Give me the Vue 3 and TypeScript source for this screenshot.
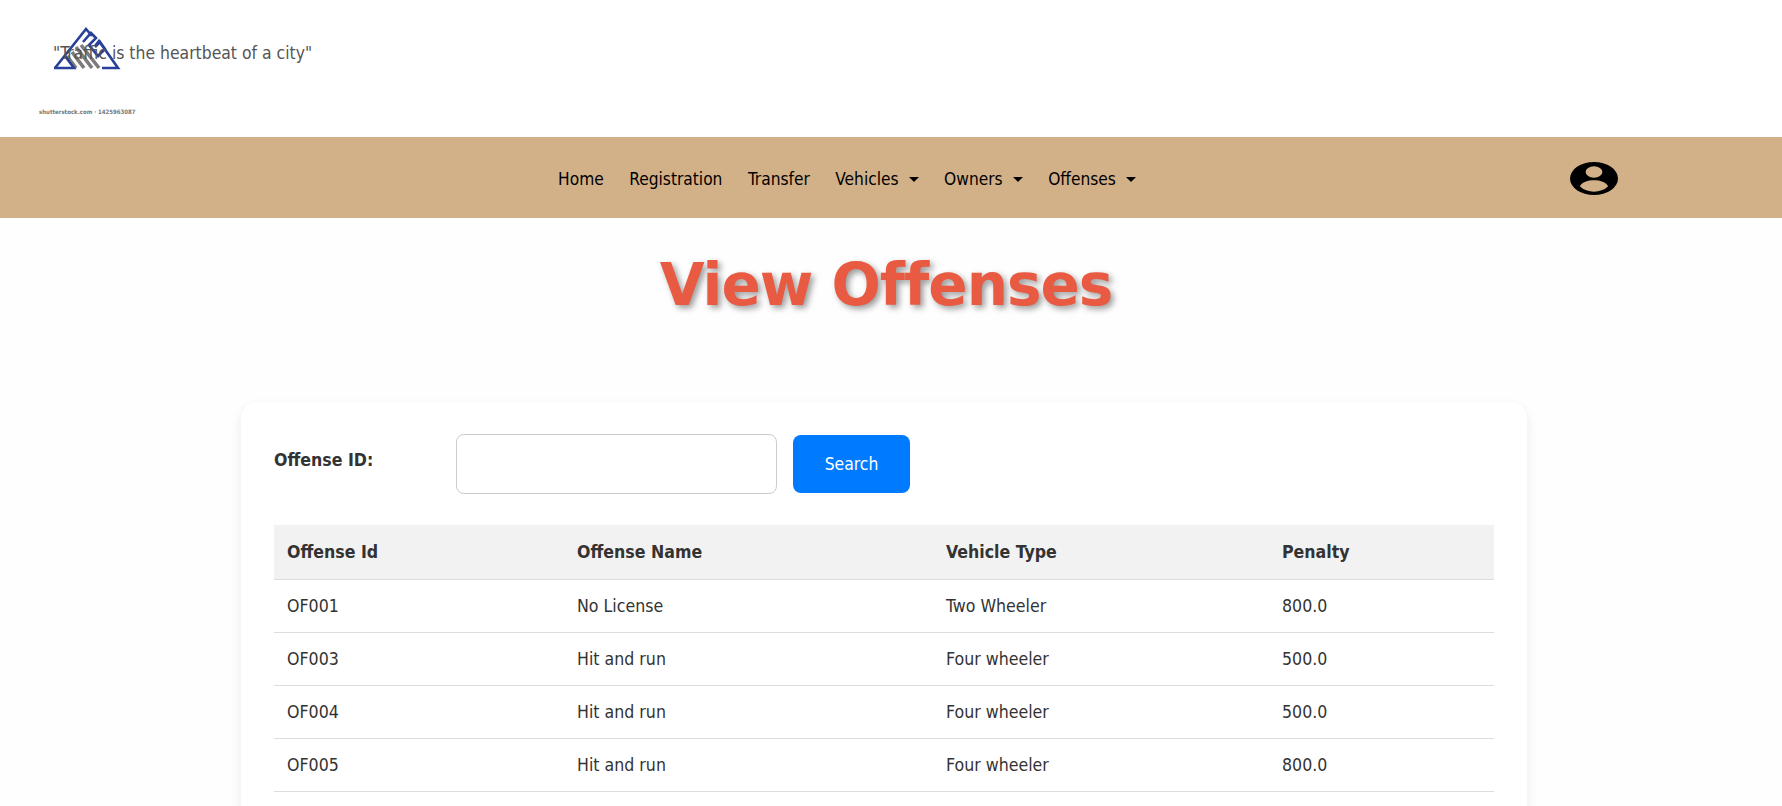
<script setup lang="ts">
interface Offense { id: string; name: string; type: string; penalty: string }
const navItems: { label: string; caret: boolean }[] = [
  { label: 'Home', caret: false },
  { label: 'Registration', caret: false },
  { label: 'Transfer', caret: false },
  { label: 'Vehicles', caret: true },
  { label: 'Owners', caret: true },
  { label: 'Offenses', caret: true },
]
const rows: Offense[] = [
  { id: 'OF001', name: 'No License', type: 'Two Wheeler', penalty: '800.0' },
  { id: 'OF003', name: 'Hit and run', type: 'Four wheeler', penalty: '500.0' },
  { id: 'OF004', name: 'Hit and run', type: 'Four wheeler', penalty: '500.0' },
  { id: 'OF005', name: 'Hit and run', type: 'Four wheeler', penalty: '800.0' },
]
</script>

<template>
  <div class="page">
    <header class="top">
      <div class="brand">
        <svg class="logo" viewBox="0 0 70 44" width="70" height="44" aria-hidden="true">
          <g stroke="#7c7c7c" stroke-width="3.6" fill="none">
            <path d="M15 29 L24 41" />
            <path d="M20 25 L32 41" />
            <path d="M24 20 L40 41" />
            <path d="M29 18 L47 41" />
          </g>
          <g stroke="#28409a" stroke-width="2.6" fill="none">
            <path d="M3 41 L34 2 L40 9" />
            <path d="M2 41 H22 L13 29" />
            <path d="M31 15 L39 6 L44 11 L37 18 L46 29 L53 22 L48 15 L43 20" />
            <path d="M43 19 L47 14 L66 41 H50" />
          </g>
        </svg>
        <span class="stock">shutterstock.com · 1425963087</span>
        <p class="quote">"Traffic is the heartbeat of a city"</p>
      </div>
    </header>

    <nav class="nav">
      <ul class="links">
        <li v-for="item in navItems" :key="item.label" class="link">
          {{ item.label }}<i v-if="item.caret" class="caret"></i>
        </li>
      </ul>
      <svg class="user" viewBox="0 0 16 16" preserveAspectRatio="none" aria-label="Profile">
        <path fill-rule="evenodd" d="M8 0a8 8 0 1 0 0 16A8 8 0 0 0 8 0ZM8 2.05a2.8 2.8 0 1 1 0 5.6a2.8 2.8 0 0 1 0-5.6ZM3.3 11.8C4 9.8 6 8.9 8 8.9s4 .9 4.7 2.9C11.5 13.6 9.8 14.4 8 14.4s-3.5-.8-4.7-2.6Z" />
      </svg>
    </nav>

    <h1 class="title">View Offenses</h1>

    <main class="card">
      <form class="search" @submit.prevent>
        <label class="label" for="oid">Offense ID:</label>
        <input id="oid" class="input" type="text" />
        <button class="btn" type="submit">Search</button>
      </form>
      <table class="table">
        <colgroup>
          <col class="c1" /><col class="c2" /><col class="c3" /><col class="c4" />
        </colgroup>
        <thead>
          <tr><th>Offense Id</th><th>Offense Name</th><th>Vehicle Type</th><th>Penalty</th></tr>
        </thead>
        <tbody>
          <tr v-for="r in rows" :key="r.id">
            <td>{{ r.id }}</td><td>{{ r.name }}</td><td>{{ r.type }}</td><td>{{ r.penalty }}</td>
          </tr>
        </tbody>
      </table>
    </main>
  </div>
</template>

<style>
html, body { margin: 0; height: 100%; overflow: hidden; background: #fff; }
</style>

<style scoped>
.page { font-family: "DejaVu Sans Condensed", "Noto Sans", sans-serif; font-size: 16px; color: #333; height: 806px; overflow: hidden; background: #fefefe; }
.top { height: 137px; background: #fff; }
.brand { position: relative; height: 137px; }
.logo { position: absolute; left: 52px; top: 27px; }
.stock { position: absolute; left: 39px; top: 108px; font-size: 6px; line-height: 8px; font-weight: 700; color: #777; white-space: nowrap; }
.quote { position: absolute; left: 53px; top: 41px; margin: 0; font-size: 17.4px; line-height: 24px; color: #555; white-space: nowrap; }
.nav { height: 81px; background: #d2b188; display: flex; align-items: center; justify-content: center; position: relative; }
.links { list-style: none; margin: 0; padding: 0; display: flex; gap: 25.5px; font-size: 17.2px; transform: translate(-44px, 1px); }
.link { color: #000; line-height: 24px; white-space: nowrap; }
.caret { display: inline-block; margin-left: 10px; vertical-align: 3px; border-top: 5px solid #000; border-left: 5px solid transparent; border-right: 5px solid transparent; }
.user { position: absolute; left: 1570px; top: 25px; width: 48px; height: 33px; }
.title { margin: 29px 0 0; padding-right: 10px; height: 76px; text-align: center; font-family: "DejaVu Sans", sans-serif; font-size: 58px; letter-spacing: -1px; line-height: 76px; font-weight: 700; color: #e85a41; text-shadow: 3px 3px 6px rgba(0,0,0,.4); }
.card { margin: 79px 255px 0 241px; padding: 32px 33px; background: #fff; border-radius: 16px; box-shadow: 0 4px 12px rgba(0,0,0,.08); height: 500px; }
.search { display: flex; align-items: center; height: 60px; }
.label { width: 182px; font-size: 17.6px; font-weight: 700; color: #333; margin-bottom: 8px; flex: none; }
.input { box-sizing: border-box; width: 321px; height: 60px; border: 1px solid #ccc; border-radius: 8px; padding: 0 12px; background: #fff; }
.btn { box-sizing: border-box; width: 117px; height: 58px; margin-left: 16px; border: 0; border-radius: 8px; background: #007bff; color: #fff; font: inherit; font-size: 17.4px; }
.table { width: 100%; border-collapse: collapse; table-layout: fixed; margin-top: 31px; font-size: 17.6px; }
.c1 { width: 290px; } .c2 { width: 369px; } .c3 { width: 336px; }
th, td { text-align: left; padding: 0 13px; border-bottom: 1px solid #ddd; }
th { height: 54px; background: #f2f2f2; font-weight: 700; }
td { height: 52px; }
</style>
